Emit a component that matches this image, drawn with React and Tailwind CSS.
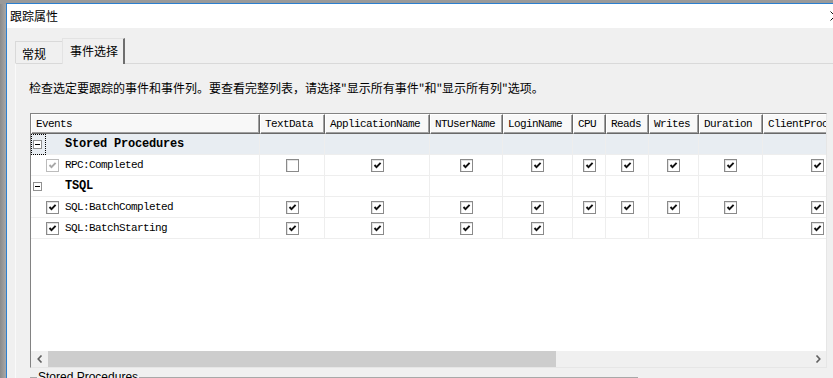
import React from "react";

const cols = [
  { name: "Events", w: 229 },
  { name: "TextData", w: 65 },
  { name: "ApplicationName", w: 105 },
  { name: "NTUserName", w: 73 },
  { name: "LoginName", w: 70 },
  { name: "CPU", w: 33 },
  { name: "Reads", w: 43 },
  { name: "Writes", w: 50 },
  { name: "Duration", w: 64 },
  { name: "ClientProcessID", w: 110 },
];

const rows = [
  { type: "group", name: "Stored Procedures", selected: true },
  { type: "event", name: "RPC:Completed", disabled: true, vals: [0, 1, 1, 1, 1, 1, 1, 1, 1] },
  { type: "group", name: "TSQL" },
  { type: "event", name: "SQL:BatchCompleted", vals: [1, 1, 1, 1, 1, 1, 1, 1, 1] },
  { type: "event", name: "SQL:BatchStarting", vals: [1, 1, 1, 1, null, null, null, null, 1] },
];

const mono = { fontFamily: '"Liberation Mono", "DejaVu Sans Mono", monospace' };
const cjk = { fontFamily: '"Noto Sans CJK SC", "Noto Sans", sans-serif' };

function Check({ checked, disabled }) {
  return (
    <span
      className={
        disabled
          ? "inline-flex w-[13px] h-[13px] border border-[#bcbcbc] bg-white items-center justify-center"
          : "inline-flex w-[13px] h-[13px] border border-[#8a8a8a] bg-white items-center justify-center shadow-[inset_1px_1px_0_#e3e3e3]"
      }
    >
      {checked ? (
        <svg width="11" height="11" viewBox="0 0 11 11">
          <polyline
            points="2.5,5 4.5,7.2 8.6,2.8"
            fill="none"
            stroke={disabled ? "#a8a8a8" : "#111"}
            strokeWidth="1.9"
          />
        </svg>
      ) : null}
    </span>
  );
}

function ExpandBox() {
  return (
    <span className="inline-flex w-[9px] h-[9px] border border-[#919191] bg-white items-center justify-center">
      <span className="block w-[5px] h-[1px] bg-black" />
    </span>
  );
}

export default function App() {
  return (
    <div className="w-[833px] h-[378px] overflow-hidden flex flex-col bg-[#f0f0f0] relative" style={cjk}>
      <div className="h-[3px] bg-[#9a9a9a] shrink-0" />
      <div className="h-[1px] flex shrink-0">
        <div className="w-[6px] bg-[#9a9a9a]" />
        <div className="flex-1 bg-[#2b7fd0]" />
      </div>
      <div className="flex-1 flex min-h-0">
        <div className="w-[6px] bg-gradient-to-r from-[#8a8a8a] to-[#a8a8a8] shrink-0" />
        <div className="w-[1px] bg-[#2b7fd0] shrink-0" />
        <div className="flex-1 flex flex-col min-w-0">
          {/* title bar */}
          <div className="h-[24px] bg-white flex items-center pl-[3px] text-[12px] text-black shrink-0 relative">
            跟踪属性
            <svg className="absolute left-[823px] top-[7px]" width="10" height="10" viewBox="0 0 10 10">
              <path d="M0.5 0.5 L9.5 9.5 M9.5 0.5 L0.5 9.5" stroke="#111" strokeWidth="1" />
            </svg>
          </div>
          {/* body */}
          <div className="flex-1 pl-[8px] pt-[10px] flex flex-col">
            {/* tabs */}
            <div className="flex items-end h-[25px] relative z-10">
              <div className="w-[47px] h-[22px] border-t border-l border-[#d9d9d9] bg-[#f0f0f0] text-[12px] flex items-center pl-[6px] pt-[3px] text-black">
                常规
              </div>
              <div className="w-[63px] h-[26px] -mb-px border-t border-l border-[#e3e3e3] border-r-2 border-r-[#6e6e6e] bg-[#f0f0f0] text-[12px] flex items-center pl-[7px] pb-[2px] text-black">
                事件选择
              </div>
            </div>
            {/* panel */}
            <div className="flex-1 border-t border-l border-t-[#d9d9d9] border-l-[#fafafa] pl-[13px] pt-[16px] flex flex-col">
              <div className="text-[12px] leading-[16px] text-black h-[16px]">
                检查选定要跟踪的事件和事件列。要查看完整列表，请选择"显示所有事件"和"显示所有列"选项。
              </div>
              {/* grid */}
              <div className="ml-[1px] mt-[17px] w-[797px] h-[255px] shrink-0 border border-t-[#828282] border-l-[#828282] border-r-[#e6e6e6] border-b-[#e6e6e6] bg-white overflow-hidden flex flex-col" style={mono}>
                {/* header */}
                <div className="flex h-[20px] shrink-0">
                  {cols.map((c) => (
                    <div
                      key={c.name}
                      style={{ width: c.w }}
                      className="shrink-0 h-[20px] bg-[#f8f8f8] border-t border-l border-t-white border-l-white border-r border-b border-r-[#696969] border-b-[#696969] shadow-[inset_-1px_-1px_0_#a0a0a0] text-[11px] tracking-[-0.6px] text-black pl-[4px] pt-[1px] flex items-center overflow-hidden whitespace-nowrap"
                    >
                      {c.name}
                    </div>
                  ))}
                </div>
                {/* rows */}
                {rows.map((r, i) => (
                  <div
                    key={i}
                    className={
                      r.selected
                        ? "flex h-[21px] shrink-0 bg-[#e8edf2]"
                        : "flex h-[21px] shrink-0 bg-white"
                    }
                  >
                    {cols.map((c, ci) => {
                      if (ci === 0) {
                        return (
                          <div
                            key={c.name}
                            style={{ width: c.w }}
                            className="shrink-0 h-[21px] border-r border-b border-[#eeeeee] flex items-center text-[11px] tracking-[-0.6px] text-black whitespace-nowrap"
                          >
                            {r.type === "group" ? (
                              <>
                                <div
                                  className={
                                    r.selected
                                      ? "w-[15px] h-[21px] border border-dotted border-black flex items-center pl-[1px]"
                                      : "w-[15px] h-[21px] flex items-center pl-[2px]"
                                  }
                                >
                                  <ExpandBox />
                                </div>
                                <span className="ml-[19px] font-bold text-[12px] tracking-[-0.2px]">{r.name}</span>
                              </>
                            ) : (
                              <>
                                <span className="ml-[15px] flex">
                                  <Check checked disabled={r.disabled} />
                                </span>
                                <span className="ml-[6px]">{r.name}</span>
                              </>
                            )}
                          </div>
                        );
                      }
                      const v = r.vals ? r.vals[ci - 1] : null;
                      return (
                        <div
                          key={c.name}
                          style={{ width: c.w }}
                          className="shrink-0 h-[21px] border-r border-b border-[#eeeeee] flex items-center justify-center"
                        >
                          {v === null || v === undefined ? null : <Check checked={v === 1} />}
                        </div>
                      );
                    })}
                  </div>
                ))}
                <div className="flex-1" />
                {/* scrollbar */}
                <div className="h-[16px] shrink-0 flex bg-[#f0f0f0] items-stretch">
                  <div className="w-[17px] flex items-center justify-center">
                    <svg width="6" height="8" viewBox="0 0 6 8">
                      <path d="M4.5 0.5 L1.2 4 L4.5 7.5" fill="none" stroke="#606060" strokeWidth="1.6" />
                    </svg>
                  </div>
                  <div className="w-[508px] bg-[#cdcdcd]" />
                  <div className="flex-1" />
                  <div className="w-[17px] flex items-center justify-center">
                    <svg width="6" height="8" viewBox="0 0 6 8">
                      <path d="M1.5 0.5 L4.8 4 L1.5 7.5" fill="none" stroke="#606060" strokeWidth="1.6" />
                    </svg>
                  </div>
                </div>
              </div>
              {/* group box */}
              <fieldset className="ml-[1px] mt-[2px] w-[608px] h-[30px] shrink-0 border border-[#a8a8a8] px-[6px]">
                <legend className="px-[1px] text-[12px] leading-[14px] text-black" style={{ fontFamily: '"Liberation Sans", Arial, sans-serif' }}>
                  Stored Procedures
                </legend>
              </fieldset>
            </div>
          </div>
        </div>
      </div>
    </div>
  );
}
